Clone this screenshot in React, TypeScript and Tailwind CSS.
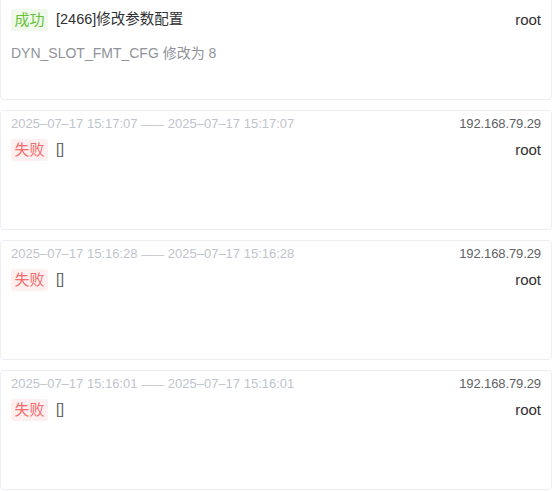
const logs = [
  {
    start: "2025–07–17 15:18:12",
    end: "2025–07–17 15:18:12",
    ip: "192.168.79.29",
    ok: true,
    title: "[2466]修改参数配置",
    user: "root",
    detail: "DYN_SLOT_FMT_CFG 修改为 8",
  },
  { start: "2025–07–17 15:17:07", end: "2025–07–17 15:17:07", ip: "192.168.79.29", ok: false, title: "[]", user: "root", detail: "" },
  { start: "2025–07–17 15:16:28", end: "2025–07–17 15:16:28", ip: "192.168.79.29", ok: false, title: "[]", user: "root", detail: "" },
  { start: "2025–07–17 15:16:01", end: "2025–07–17 15:16:01", ip: "192.168.79.29", ok: false, title: "[]", user: "root", detail: "" },
];

export default function App() {
  return (
    <div
      className="h-[492px] overflow-hidden bg-white"
      style={{ fontFamily: '"Liberation Sans", "Noto Sans CJK SC", sans-serif' }}
    >
      <div className="-mt-[20px] w-[552px] flex flex-col gap-[10px]">
        {logs.map((log, i) => (
          <div key={i} className="h-[120px] shrink-0 rounded-[4px] border border-[#ebeef5] bg-white px-[10px] pt-[6px]">
            {/* time + ip */}
            <div className="flex items-center justify-between text-[13px] leading-[14px]">
              <span className="text-[#c0c4cc]">
                {log.start} <span className="text-[11.5px]">——</span> {log.end}
              </span>
              <span className="text-[#606266] tracking-[-0.1px]">{log.ip}</span>
            </div>

            {/* status row */}
            <div className="mt-[8px] flex h-[22px] items-center justify-between text-[15px]">
              <div className="flex items-center gap-[8px]">
                <span
                  className={`rounded-[3px] px-[3.5px] leading-[22px] ${
                    log.ok ? "bg-[#f0f9eb] text-[#67c23a]" : "bg-[#fef0f0] text-[#f56c6c]"
                  }`}
                >
                  {log.ok ? "成功" : "失败"}
                </span>
                <span className={`text-[14.5px] ${log.ok ? "text-[#303133]" : "text-[#606266]"}`}>{log.title}</span>
              </div>
              <span className="text-[#303133]">{log.user}</span>
            </div>

            {log.detail && (
              <div className="mt-[14px] text-[14px] leading-[16px] text-[#909399]">{log.detail}</div>
            )}
          </div>
        ))}
      </div>
    </div>
  );
}
